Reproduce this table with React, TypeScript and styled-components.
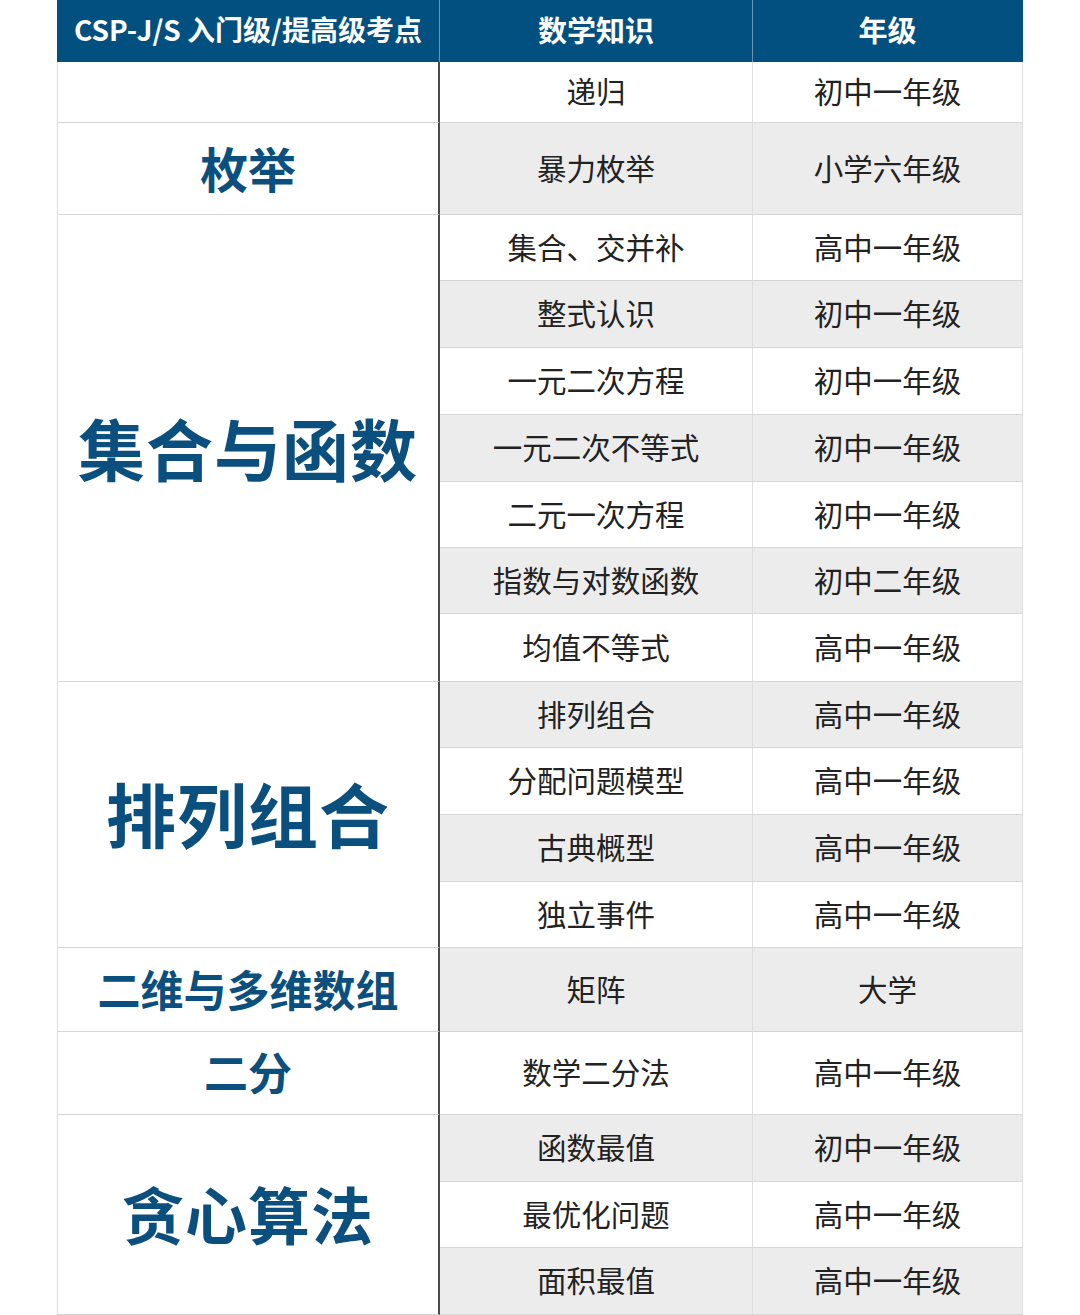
import React from 'react'
import styled, { createGlobalStyle } from 'styled-components'

const GlobalStyle = createGlobalStyle`
	html, body {
		margin: 0;
		padding: 0;
		background: #ffffff;
	}
	body {
		font-family: "Noto Sans CJK SC", "Noto Sans", "Liberation Sans", sans-serif;
	}
`

const Page = styled.div`
	width: 1080px;
	height: 1315px;
	overflow: hidden;
	padding-left: 57px;
	box-sizing: border-box;
`

const Table = styled.div<{ $rows: string }>`
	display: grid;
	grid-template-columns: 383px 313px 270px;
	grid-template-rows: ${(p) => p.$rows};
	width: 966px;
`

const HeadCell = styled.div<{ $size: number; $last?: boolean }>`
	display: flex;
	align-items: center;
	justify-content: center;
	padding-bottom: 4px;
	background: #02507f;
	color: #ffffff;
	font-weight: 700;
	font-size: ${(p) => p.$size}px;
	border-right: 1px solid ${(p) => (p.$last ? '#02507f' : '#6f93ad')};
	box-sizing: border-box;
	white-space: nowrap;
`

const GroupCell = styled.div<{ $start: number; $span: number; $size: number }>`
	grid-column: 1;
	grid-row: ${(p) => p.$start} / span ${(p) => p.$span};
	display: flex;
	align-items: center;
	justify-content: center;
	padding-bottom: 4px;
	color: #0b4f7e;
	font-weight: 700;
	font-size: ${(p) => p.$size}px;
	letter-spacing: ${(p) => (p.$size > 60 ? 1 : 0)}px;
	background: #ffffff;
	border-left: 1px solid #dcdcdc;
	border-right: 2px solid #4a4a4a;
	border-bottom: 1px solid #d6d6d6;
	box-sizing: border-box;
	white-space: nowrap;
`

const Cell = styled.div<{ $shade: boolean }>`
	display: flex;
	align-items: center;
	justify-content: center;
	padding-bottom: 4px;
	font-size: 29.5px;
	color: #222222;
	background: ${(p) => (p.$shade ? '#ececec' : '#ffffff')};
	border-right: 1px solid #dedede;
	border-bottom: 1px solid #d6d6d6;
	box-sizing: border-box;
	white-space: nowrap;
`

const rows: Array<[string, string, number]> = [
	['递归', '初中一年级', 61],
	['暴力枚举', '小学六年级', 92],
	['集合、交并补', '高中一年级', 66],
	['整式认识', '初中一年级', 67],
	['一元二次方程', '初中一年级', 67],
	['一元二次不等式', '初中一年级', 67],
	['二元一次方程', '初中一年级', 66],
	['指数与对数函数', '初中二年级', 66],
	['均值不等式', '高中一年级', 68],
	['排列组合', '高中一年级', 66],
	['分配问题模型', '高中一年级', 67],
	['古典概型', '高中一年级', 67],
	['独立事件', '高中一年级', 66],
	['矩阵', '大学', 84],
	['数学二分法', '高中一年级', 83],
	['函数最值', '初中一年级', 67],
	['最优化问题', '高中一年级', 66],
	['面积最值', '高中一年级', 67],
]

const groups = [
	{ label: '', span: 1, size: 30 },
	{ label: '枚举', span: 1, size: 48 },
	{ label: '集合与函数', span: 7, size: 67 },
	{ label: '排列组合', span: 4, size: 70 },
	{ label: '二维与多维数组', span: 1, size: 43 },
	{ label: '二分', span: 1, size: 44 },
	{ label: '贪心算法', span: 3, size: 62 },
]

export default function App() {
	const template = ['62px', ...rows.map(([, , h]) => `${h}px`)].join(' ')
	let start = 2

	return (
		<>
			<GlobalStyle />
			<Page>
				<Table $rows={template}>
					<HeadCell $size={28}>CSP-J/S 入门级/提高级考点</HeadCell>
					<HeadCell $size={29}>数学知识</HeadCell>
					<HeadCell $size={29} $last>
						年级
					</HeadCell>
					{groups.map((g) => {
						const cell = (
							<GroupCell key={g.label + start} $start={start} $span={g.span} $size={g.size}>
								{g.label}
							</GroupCell>
						)
						start += g.span
						return cell
					})}
					{rows.map(([topic, grade], i) => (
						<React.Fragment key={topic}>
							<Cell $shade={i % 2 === 1} style={{ gridRow: i + 2, gridColumn: 2 }}>
								{topic}
							</Cell>
							<Cell $shade={i % 2 === 1} style={{ gridRow: i + 2, gridColumn: 3 }}>
								{grade}
							</Cell>
						</React.Fragment>
					))}
				</Table>
			</Page>
		</>
	)
}
